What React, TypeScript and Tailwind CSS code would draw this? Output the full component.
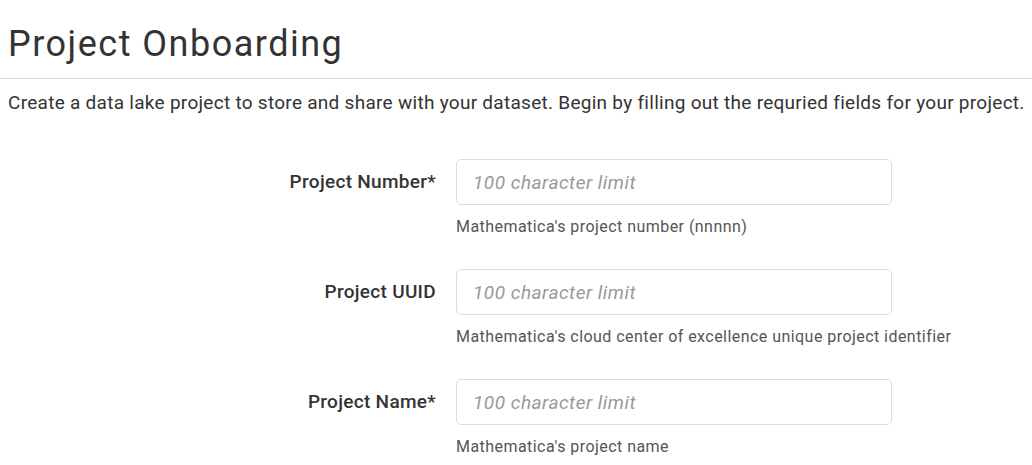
const fields = [
  { label: 'Project Number*', help: "Mathematica's project number (nnnnn)" },
  { label: 'Project UUID', help: "Mathematica's cloud center of excellence unique project identifier" },
  { label: 'Project Name*', help: "Mathematica's project name" },
];

export default function App() {
  return (
    <div className="min-h-screen bg-white font-['Roboto',sans-serif] text-[#333]">
      {/* Header */}
      <div className="pl-2 pt-[22px]">
        <h1 className="text-[36px] leading-[44px] font-normal tracking-[1.5px]">Project Onboarding</h1>
      </div>
      <hr className="mt-[12px] border-t border-[#ddd]" />
      <p className="pl-2 pt-[12px] text-[19px] leading-[24px] tracking-[0.28px]">
        Create a data lake project to store and share with your dataset. Begin by filling out the requried fields for your project.
      </p>

      {/* Form */}
      <form className="mt-[44px] flex flex-col gap-[16px]">
        {fields.map((f) => (
          <div key={f.label} className="flex gap-5">
            <label className="w-[436px] shrink-0 pt-[11px] text-right text-[19px] leading-6 font-medium tracking-[0.3px] text-[#333]">
              {f.label}
            </label>
            <div className="w-[436px]">
              <input
                type="text"
                placeholder="100 character limit"
                className="h-[46px] w-full rounded-[5px] border border-[#ddd] px-4 text-[19px] italic tracking-[0.5px] text-[#333] placeholder:text-[#999] outline-none"
              />
              <p className="mt-[12px] h-[36px] whitespace-nowrap text-[16px] leading-5 tracking-[0.45px] text-[#555]">
                {f.help}
              </p>
            </div>
          </div>
        ))}
      </form>
    </div>
  );
}
